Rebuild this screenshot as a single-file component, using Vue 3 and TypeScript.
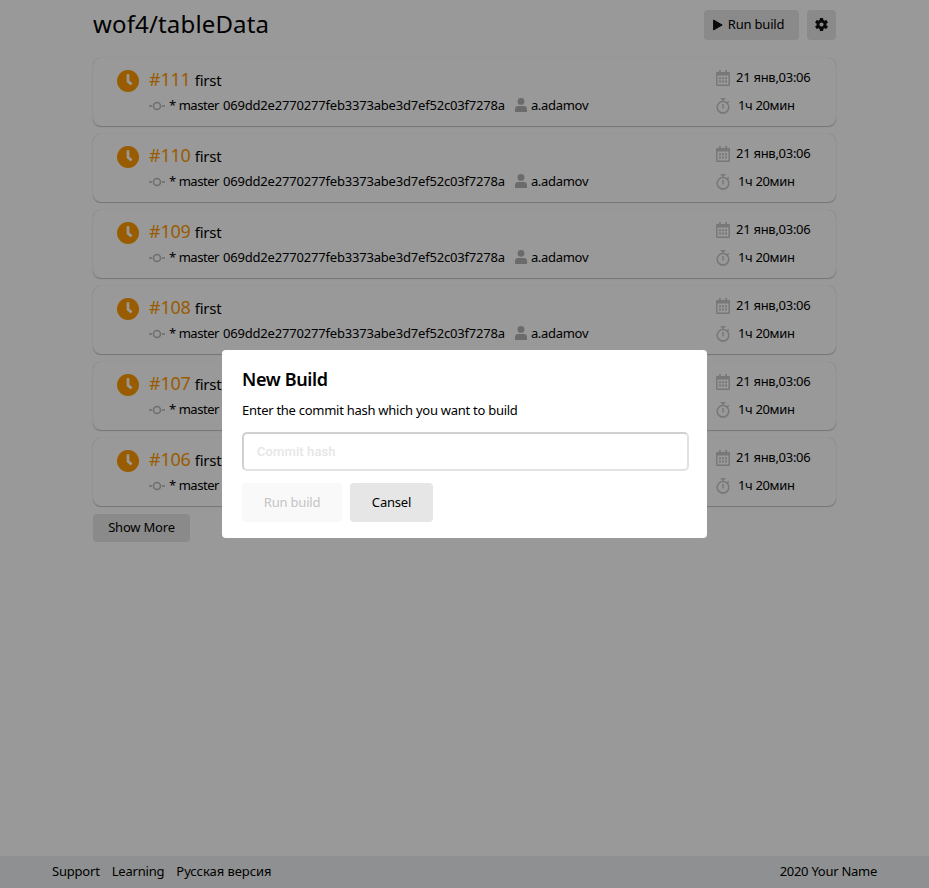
<script setup lang="ts">
import { ref } from 'vue'

interface Build {
  id: number
  title: string
  branch: string
  hash: string
  author: string
  date: string
  duration: string
}

const builds: Build[] = [111, 110, 109, 108, 107, 106].map((id) => ({
  id,
  title: 'first',
  branch: '* master',
  hash: '069dd2e2770277feb3373abe3d7ef52c03f7278a',
  author: 'a.adamov',
  date: '21 янв,03:06',
  duration: '1ч 20мин',
}))

const commitHash = ref('')
const modalOpen = ref(true)
</script>

<template>
  <div class="page">
    <header class="header">
      <h1 class="repo">wof4/tableData</h1>
      <button class="btn btn-run" @click="modalOpen = true">
        <svg width="10" height="12" viewBox="0 0 10 12"><path d="M.6 1.1 9.2 6 .6 10.9z" fill="#111" stroke="#111" stroke-linejoin="round" /></svg>
        <span>Run build</span>
      </button>
      <button class="btn btn-gear" aria-label="Settings">
        <svg width="13" height="13" viewBox="2 2 20 20"><path fill="#111" d="M19.43 12.98c.04-.32.07-.64.07-.98s-.03-.66-.07-.98l2.11-1.65c.19-.15.24-.42.12-.64l-2-3.46c-.12-.22-.39-.3-.61-.22l-2.49 1c-.52-.4-1.08-.73-1.69-.98l-.38-2.65A.488.488 0 0 0 14 2h-4c-.25 0-.46.18-.49.42l-.38 2.65c-.61.25-1.17.59-1.69.98l-2.49-1c-.23-.09-.49 0-.61.22l-2 3.46c-.13.22-.07.49.12.64l2.11 1.65c-.04.32-.07.65-.07.98s.03.66.07.98l-2.11 1.65c-.19.15-.24.42-.12.64l2 3.46c.12.22.39.3.61.22l2.49-1c.52.4 1.08.73 1.69.98l.38 2.65c.03.24.24.42.49.42h4c.25 0 .46-.18.49-.42l.38-2.65c.61-.25 1.17-.59 1.69-.98l2.49 1c.23.09.49 0 .61-.22l2-3.46c.12-.22.07-.49-.12-.64l-2.11-1.65zM12 15.2a3.2 3.2 0 1 1 0-6.4 3.2 3.2 0 0 1 0 6.4z" /></svg>
      </button>
    </header>

    <main class="content">
      <article v-for="b in builds" :key="b.id" class="card">
        <svg class="status" width="22" height="22" viewBox="0 0 22 22"><circle cx="11" cy="11" r="11" fill="#ff9a00" /><path d="M11 4.2v7.2l3.6 3" fill="none" stroke="#fff" stroke-width="2.7" /></svg>
        <div class="info">
          <div class="line-top">
            <span class="number">#{{ b.id }}</span>
            <span class="title">{{ b.title }}</span>
          </div>
          <div class="line-bottom">
            <svg width="16" height="10" viewBox="0 0 16 10" fill="none" stroke="#b8b8b8" stroke-width="1.6"><circle cx="8" cy="5" r="3.5" /><path d="M0 5h3M13 5h3" /></svg>
            <span class="branch">{{ b.branch }}</span>
            <span class="hash">{{ b.hash }}</span>
            <svg class="user" width="12" height="14" viewBox="0 0 12 14" fill="#b3b3b3"><circle cx="6" cy="3.4" r="3.4" /><path d="M0 14v-2.8C0 9 1.3 8 3 8h6c1.7 0 3 1 3 3.2V14z" /></svg>
            <span class="author">{{ b.author }}</span>
          </div>
        </div>
        <div class="times">
          <div class="date">
            <svg width="14" height="16" viewBox="0 0 14 16"><path fill="#c8c8c8" fill-rule="evenodd" d="M1 2h2V0h1.7v2h4.6V0H11v2h2a1 1 0 0 1 1 1v12a1 1 0 0 1-1 1H1a1 1 0 0 1-1-1V3a1 1 0 0 1 1-1zm.5 3.6v8.9h11V5.6zM3 7.2h2v2H3zm3 0h2v2H6zm3 0h2v2H9zm-6 3.3h2v2H3zm3 0h2v2H6zm3 0h2v2H9z" /></svg>
            <span>{{ b.date }}</span>
          </div>
          <div class="duration">
            <svg width="14" height="16" viewBox="0 0 14 16" fill="none" stroke="#c8c8c8" stroke-width="1.6"><circle cx="7" cy="9.3" r="5.8" /><path d="M4.7.8h4.6M7 .8v2.8M7 6v4.4M11.3 4.9l1.4-1.4" /></svg>
            <span>{{ b.duration }}</span>
          </div>
        </div>
      </article>
      <button class="btn btn-more">Show More</button>
    </main>

    <footer class="footer">
      <a>Support</a>
      <a>Learning</a>
      <a class="lang">Русская версия</a>
      <span class="copy">2020 Your Name</span>
    </footer>

    <div v-if="modalOpen" class="overlay">
      <section class="modal">
        <h2>New Build</h2>
        <p>Enter the commit hash which you want to build</p>
        <input v-model="commitHash" type="text" placeholder="Commit hash" />
        <div class="actions">
          <button class="btn action-run" :disabled="!commitHash">Run build</button>
          <button class="btn action-cancel" @click="modalOpen = false">Cansel</button>
        </div>
      </section>
    </div>
  </div>
</template>

<style>
body {
  background: #fff;
  overflow: hidden;
}
</style>

<style scoped>
.page {
  box-sizing: border-box;
  height: 100vh;
  display: flex;
  flex-direction: column;
  font: 13px/18px "Noto Sans", "Open Sans", sans-serif;
  letter-spacing: -0.2px;
  color: #000;
}
svg {
  display: block;
  flex: none;
}
.btn {
  display: flex;
  align-items: center;
  justify-content: center;
  box-sizing: border-box;
  padding: 0;
  border: 0;
  border-radius: 4px;
  background: #e6e6e6;
  color: #000;
  font: inherit;
  letter-spacing: inherit;
}
.header {
  display: flex;
  align-items: flex-start;
  gap: 8px;
  height: 58px;
  padding: 10px 93px 0;
  box-sizing: border-box;
  flex: none;
}
.repo {
  flex: 1;
  margin: -1px 0 0;
  font-size: 24px;
  line-height: 30px;
  font-weight: 450;
  letter-spacing: 0.15px;
}
.btn-run {
  width: 95px;
  height: 30px;
  gap: 5px;
  padding-right: 6px;
}
.btn-run span {
  padding-bottom: 2px;
}
.btn-gear {
  width: 29px;
  height: 30px;
  padding-bottom: 2px;
}
.content {
  flex: 1;
  padding: 0 93px;
}
.card {
  display: flex;
  align-items: flex-start;
  box-sizing: border-box;
  height: 68px;
  margin-bottom: 8px;
  padding: 11px 20px 0 24px;
  border-radius: 8px;
  background: #fff;
  box-shadow: 0 0 1px rgba(67, 68, 69, 0.3), 0 1px 1px rgba(67, 68, 69, 0.3);
}
.status {
  margin-top: 1px;
}
.info {
  flex: 1;
  margin-left: 10px;
}
.line-top {
  display: flex;
  align-items: flex-start;
  gap: 4px;
  height: 28px;
  line-height: 22px;
}
.number {
  font-size: 18px;
  line-height: 20px;
  color: #ff9a00;
}
.title {
  font-size: 15px;
}
.line-bottom {
  display: flex;
  align-items: center;
  height: 18px;
}
.line-bottom span,
.times span {
  padding-bottom: 2px;
}
.branch {
  margin-left: 4px;
  letter-spacing: -0.45px;
}
.hash {
  margin-left: 4px;
  letter-spacing: -0.19px;
}
.user {
  margin: 0 4px 2px 10px;
}
.author {
  letter-spacing: -0.3px;
}
.times {
  width: 100px;
  letter-spacing: -0.28px;
}
.date,
.duration {
  display: flex;
  align-items: center;
  height: 18px;
}
.date {
  gap: 6px;
}
.duration {
  gap: 8px;
  margin-top: 10px;
  letter-spacing: -0.35px;
}
.btn-more {
  width: 97px;
  height: 28px;
  padding-bottom: 2px;
}
.footer {
  display: flex;
  align-items: center;
  box-sizing: border-box;
  height: 32px;
  padding: 0 52px 2px;
  gap: 12px;
  flex: none;
  background: #edf0f2;
}
.lang {
  letter-spacing: -0.05px;
}
.copy {
  margin-left: auto;
  letter-spacing: -0.27px;
}
.overlay {
  position: fixed;
  inset: 0;
  display: flex;
  align-items: center;
  justify-content: center;
  background: rgba(0, 0, 0, 0.4);
}
.modal {
  box-sizing: border-box;
  width: 485px;
  height: 188px;
  padding: 19px 18px 16px 20px;
  border-radius: 4px;
  background: #fff;
}
.modal h2 {
  margin: 0;
  font-size: 18px;
  line-height: 20px;
  font-weight: 600;
  letter-spacing: -0.35px;
}
.modal p {
  margin: 12px 0 13px;
  letter-spacing: -0.27px;
}
.modal input {
  display: block;
  box-sizing: border-box;
  width: 447px;
  height: 39px;
  padding: 0 13px;
  border: 2px solid #e2e2e2;
  border-top-color: #d0d0d0;
  border-left-color: #d0d0d0;
  border-radius: 5px;
  outline: 0;
  background: #fff;
  font: 500 13px Roboto, sans-serif;
  letter-spacing: 0.1px;
}
.modal input::placeholder {
  color: #e6e6e6;
}
.actions {
  display: flex;
  gap: 8px;
  margin-top: 12px;
}
.action-run {
  width: 100px;
  height: 39px;
  padding-bottom: 2px;
}
.action-run:disabled {
  background: #f9f9f9;
  color: #c4c4c4;
}
.action-cancel {
  width: 83px;
  height: 39px;
  padding-bottom: 2px;
}
</style>
